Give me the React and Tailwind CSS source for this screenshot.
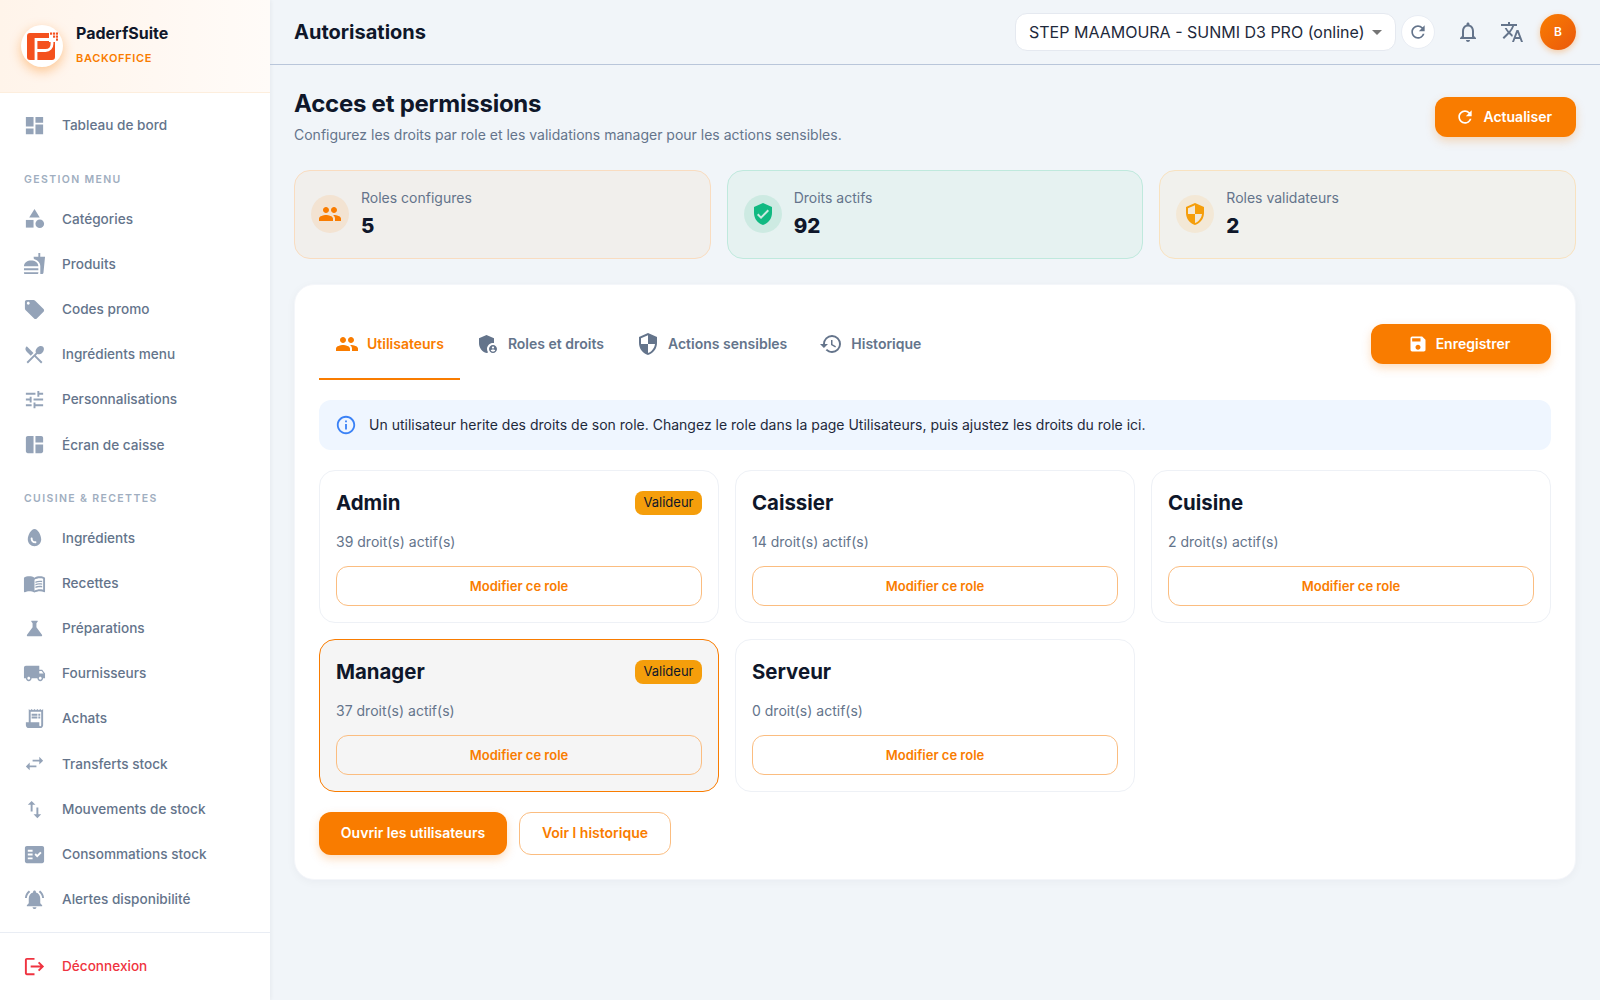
import {
  MdDashboard, MdCategory, MdFastfood, MdLocalOffer, MdRestaurantMenu, MdTune, MdSpaceDashboard,
  MdEgg, MdMenuBook, MdScience, MdLocalShipping, MdReceiptLong, MdSwapHoriz, MdSwapVert,
  MdFactCheck, MdNotificationsActive, MdLogout, MdOutlineNotifications, MdTranslate, MdRefresh,
  MdPeople, MdVerifiedUser, MdSecurity, MdAdminPanelSettings, MdHistory, MdSave, MdInfoOutline,
  MdArrowDropDown,
} from "react-icons/md";

const GROUPS = [
  { items: [{ label: "Tableau de bord", icon: MdDashboard }] },
  {
    title: "GESTION MENU",
    items: [
      { label: "Catégories", icon: MdCategory },
      { label: "Produits", icon: MdFastfood },
      { label: "Codes promo", icon: MdLocalOffer },
      { label: "Ingrédients menu", icon: MdRestaurantMenu },
      { label: "Personnalisations", icon: MdTune },
      { label: "Écran de caisse", icon: MdSpaceDashboard },
    ],
  },
  {
    title: "CUISINE & RECETTES",
    items: [
      { label: "Ingrédients", icon: MdEgg },
      { label: "Recettes", icon: MdMenuBook },
      { label: "Préparations", icon: MdScience },
      { label: "Fournisseurs", icon: MdLocalShipping },
      { label: "Achats", icon: MdReceiptLong },
      { label: "Transferts stock", icon: MdSwapHoriz },
      { label: "Mouvements de stock", icon: MdSwapVert },
      { label: "Consommations stock", icon: MdFactCheck },
      { label: "Alertes disponibilité", icon: MdNotificationsActive },
    ],
  },
];

const TABS = [
  { label: "Utilisateurs", icon: MdPeople, active: true },
  { label: "Roles et droits", icon: MdAdminPanelSettings },
  { label: "Actions sensibles", icon: MdSecurity },
  { label: "Historique", icon: MdHistory },
];

const ROLES = [
  { name: "Admin", count: 39, validator: true },
  { name: "Caissier", count: 14 },
  { name: "Cuisine", count: 2 },
  { name: "Manager", count: 37, validator: true, selected: true },
  { name: "Serveur", count: 0 },
];

const Logo = () => (
  <div className="flex h-[42px] w-[42px] shrink-0 items-center justify-center rounded-full bg-white shadow-[0_4px_12px_rgba(249,124,0,0.4)]">
    <svg viewBox="0 0 32 32" className="h-[32px] w-[32px]">
      {/* orange block with the P cut out in white */}
      <path
        d="M4 3H23V12H29V27a3 3 0 0 1-3 3H4a3 3 0 0 1-3-3V6a3 3 0 0 1 3-3z"
        fill="#f4511e"
      />
      <path
        d="M10 31V9.500H24.500a1.500 1.500 0 0 1 1.500 1.500V14c0 3.500-2.500 6.500-6.500 6.500H10"
        fill="none"
        stroke="#fff"
        strokeWidth="2.800"
      />
      <g fill="#f4511e">
        <rect x="24" y="2.500" width="2.200" height="2.200" />
        <rect x="27" y="2.500" width="2.200" height="2.200" />
        <rect x="30" y="2.500" width="2.200" height="2.200" />
        <rect x="27" y="5.500" width="2.200" height="2.200" />
        <rect x="30" y="5.500" width="2.200" height="2.200" />
        <rect x="30" y="8.500" width="2.200" height="2.200" />
      </g>
    </svg>
  </div>
);

const Sidebar = () => (
  <aside className="flex h-screen w-[270px] shrink-0 flex-col bg-white shadow-[1px_0_4px_rgba(15,23,42,0.05)]">
    <div className="flex h-[93px] shrink-0 items-center gap-[13px] border-b border-[#fdeedd] bg-gradient-to-r from-[#fff4ea] to-[#fffbf8] pl-[21px]">
      <Logo />
      <div className="mb-[5px]">
        <div className="text-base font-bold text-[#0f172a]">PaderfSuite</div>
        <div className="mt-[5px] text-[11px] font-semibold tracking-[0.06em] text-[#f97c00]">BACKOFFICE</div>
      </div>
    </div>
    <nav className="flex-1 overflow-hidden pt-[10px]">
      {GROUPS.map((group, i) => (
        <div key={i}>
          {group.title && (
            <div className="flex h-[48px] items-start pt-[24.500px] pl-[24px] text-[10.500px] leading-[14px] font-semibold tracking-[0.13em] text-[#a0aec0]">
              {group.title}
            </div>
          )}
          {group.items.map(({ label, icon: Icon }) => (
            <div key={label} className="flex h-[45.200px] items-center gap-[16px] pl-[23px] text-[13.600px] font-medium text-[#64748b]">
              <Icon className="h-[23px] w-[23px] shrink-0 text-[#94a3b8]" />
              <span>{label}</span>
            </div>
          ))}
        </div>
      ))}
    </nav>
    <div className="flex h-[68px] shrink-0 items-center gap-[16px] border-t border-[#e9edf4] pl-[23px] text-[13.600px] font-medium text-[#ef3340]">
      <MdLogout className="h-[23px] w-[23px] shrink-0" />
      <span>Déconnexion</span>
    </div>
  </aside>
);

const Header = () => (
  <header className="flex h-[65px] shrink-0 items-center justify-between border-b border-[#b9c6da] px-[24px]">
    <h1 className="text-[20px] font-bold text-[#0f172a]">Autorisations</h1>
    <div className="flex items-center">
      <div className="flex h-[38px] w-[381px] items-center justify-between rounded-xl border border-[#e5e9f0] bg-white pr-[6px] pl-[13px] text-base text-[#1e293b]">
        <span className="whitespace-nowrap">STEP MAAMOURA - SUNMI D3 PRO (online)</span>
        <MdArrowDropDown className="h-[24px] w-[24px] text-[#757575]" />
      </div>
      <button className="ml-[5px] flex h-[34px] w-[34px] items-center justify-center rounded-full border border-[#e9edf4] bg-white text-[#64748b]">
        <MdRefresh className="h-[20px] w-[20px]" />
      </button>
      <MdOutlineNotifications className="ml-[21px] h-[24px] w-[24px] text-[#64748b]" />
      <MdTranslate className="ml-[20px] h-[24px] w-[24px] text-[#64748b]" />
      <div className="ml-[16px] flex h-[36px] w-[36px] items-center justify-center rounded-full bg-gradient-to-br from-[#f97c00] to-[#ea580c] text-xs font-semibold text-white shadow-[0_2px_6px_rgba(249,124,0,0.35)]">
        B
      </div>
    </div>
  </header>
);

const StatCard = ({ label, value, icon: Icon, box, circle, tint }) => (
  <div className={`flex h-[88.500px] items-center gap-[12px] rounded-2xl border px-[16px] ${box}`}>
    <div className={`flex h-[38px] w-[38px] items-center justify-center rounded-full ${circle}`}>
      <Icon className={`h-[24px] w-[24px] ${tint}`} />
    </div>
    <div>
      <div className="text-sm leading-[21px] text-[#64748b]">{label}</div>
      <div className="mt-[3px] text-[20.500px] leading-[30px] font-extrabold text-[#0f172a]">{value}</div>
    </div>
  </div>
);

const RoleCard = ({ role }) => (
  <div
    className={`flex h-[153px] flex-col rounded-2xl border p-[16px] ${
      role.selected ? "border-[#f97c00] bg-[#f5f5f5]" : "border-[#eef1f6] bg-white"
    }`}
  >
    <div className="flex h-[32px] items-center justify-between">
      <span className="text-[20.400px] font-bold text-[#0f172a]">{role.name}</span>
      {role.validator && (
        <span className="flex h-[24px] items-center rounded-lg bg-[#f59e0b] px-[8.500px] text-[13px] text-[#0f172a]">Valideur</span>
      )}
    </div>
    <div className="mt-[12px] text-sm leading-[21px] text-[#64748b]">{role.count} droit(s) actif(s)</div>
    <button className="mt-[14px] h-[40px] w-full rounded-xl border border-[#fbbd80] pt-[2px] text-[13px] font-semibold text-[#f97c00]">
      Modifier ce role
    </button>
  </div>
);

export default function App() {
  return (
    <div className="flex h-screen overflow-hidden bg-[#f1f5f9] font-['Inter',sans-serif]">
      <Sidebar />
      <div className="flex min-w-0 flex-1 flex-col">
        <Header />
        <main className="flex-1 overflow-hidden px-[24px] pt-[21px]">
          <div className="flex items-start justify-between">
            <div>
              <h2 className="text-2xl leading-[36px] font-bold tracking-[-0.01em] text-[#0f172a]">Acces et permissions</h2>
              <p className="mt-[2px] text-sm leading-[21px] text-[#64748b]">
                Configurez les droits par role et les validations manager pour les actions sensibles.
              </p>
            </div>
            <button className="mt-[11px] flex h-[40px] items-center gap-[8px] rounded-xl bg-[#f97c00] pr-[24px] pl-[20px] text-sm font-semibold text-white shadow-[0_4px_10px_rgba(249,124,0,0.25)]">
              <MdRefresh className="h-[20px] w-[20px]" />
              Actualiser
            </button>
          </div>

          <div className="mt-[25px] grid grid-cols-3 gap-[16px]">
            <StatCard label="Roles configures" value="5" icon={MdPeople} box="border-[#f9dcc0] bg-[#f1efec]" circle="bg-[#f3e3d2]" tint="text-[#f97c00]" />
            <StatCard label="Droits actifs" value="92" icon={MdVerifiedUser} box="border-[#bfe9dd] bg-[#e6f2f1]" circle="bg-[#cdeae2]" tint="text-[#10b981]" />
            <StatCard label="Roles validateurs" value="2" icon={MdSecurity} box="border-[#f8e2c0] bg-[#f1f1ed]" circle="bg-[#f3e8d6]" tint="text-[#f59e0b]" />
          </div>

          <section className="mt-[25px] rounded-[20px] border border-[#f4f6fa] bg-white px-[24px] pt-[24.500px] pb-[24px] shadow-[0_2px_10px_rgba(15,23,42,0.04)]">
            <div className="flex items-center justify-between">
              <div className="flex">
                {TABS.map(({ label, icon: Icon, active }) => (
                  <div
                    key={label}
                    className={`flex h-[71px] items-center gap-[8px] border-b-2 px-[16px] text-sm font-semibold ${
                      active ? "border-[#f97c00] text-[#f97c00]" : "border-transparent text-[#64748b]"
                    }`}
                  >
                    <Icon className="h-[24px] w-[24px]" />
                    {label}
                  </div>
                ))}
              </div>
              <button className="mb-[2px] flex h-[40px] w-[180px] items-center justify-center gap-[8px] rounded-xl bg-[#f97c00] pr-[4px] text-sm font-semibold text-white shadow-[0_4px_10px_rgba(249,124,0,0.25)]">
                <MdSave className="h-[20px] w-[20px]" />
                Enregistrer
              </button>
            </div>

            <div className="mt-[20px] flex h-[50px] items-center gap-[12px] rounded-xl bg-[#eff6ff] px-[16px] text-sm text-[#1e293b]">
              <MdInfoOutline className="h-[22px] w-[22px] shrink-0 text-[#3b82f6]" />
              <span>Un utilisateur herite des droits de son role. Changez le role dans la page Utilisateurs, puis ajustez les droits du role ici.</span>
            </div>

            <div className="mt-[20px] grid grid-cols-3 gap-[16px]">
              {ROLES.map((role) => (
                <RoleCard key={role.name} role={role} />
              ))}
            </div>

            <div className="mt-[20px] flex gap-[12px]">
              <button className="h-[43px] w-[188px] rounded-xl bg-[#f97c00] pb-[1px] text-sm font-semibold text-white shadow-[0_4px_10px_rgba(249,124,0,0.25)]">
                Ouvrir les utilisateurs
              </button>
              <button className="h-[43px] w-[152px] rounded-xl border border-[#fbbd80] bg-white pb-[1px] text-sm font-semibold text-[#f97c00]">
                Voir l historique
              </button>
            </div>
          </section>
        </main>
      </div>
    </div>
  );
}
